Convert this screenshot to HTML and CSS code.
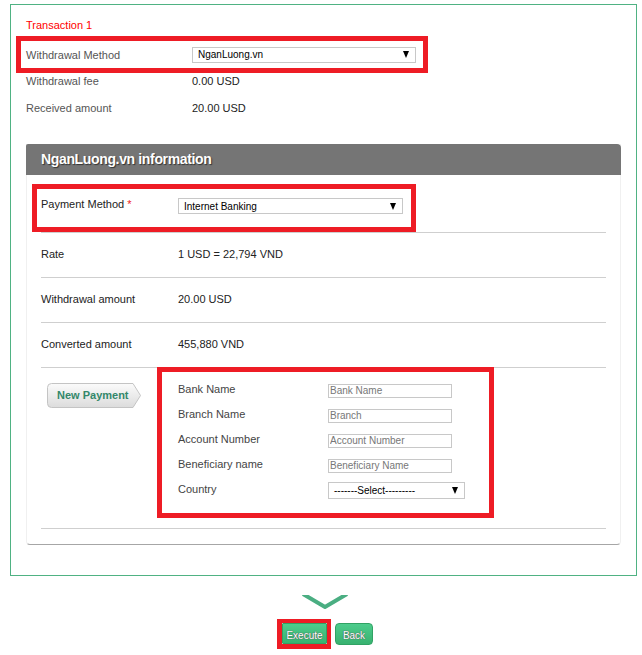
FILE: index.html
```html
<!DOCTYPE html>
<html>
<head>
<meta charset="utf-8">
<link rel="stylesheet" href="styles.css">
</head>
<body>
<div class="outer">
  <div class="txn-title">Transaction 1</div>
  <div class="txn">
    <div class="trow hl hl1">
      <span class="tlabel">Withdrawal Method</span>
      <div class="sel sel1"><span>NganLuong.vn</span><i class="tri"></i></div>
    </div>
    <div class="trow">
      <span class="tlabel">Withdrawal fee</span>
      <span class="tval">0.00 USD</span>
    </div>
    <div class="trow">
      <span class="tlabel">Received amount</span>
      <span class="tval">20.00 USD</span>
    </div>
  </div>

  <div class="panel">
    <div class="panel-head">NganLuong.vn information</div>
    <div class="pm hl">
      <span class="plabel">Payment Method <em>*</em></span>
      <div class="sel sel2"><span>Internet Banking</span><i class="tri"></i></div>
    </div>
    <div class="rows">
      <div class="prow"><span class="plabel">Rate</span><span class="pval">1 USD = 22,794 VND</span></div>
      <div class="prow"><span class="plabel">Withdrawal amount</span><span class="pval">20.00 USD</span></div>
      <div class="prow"><span class="plabel">Converted amount</span><span class="pval">455,880 VND</span></div>
      <div class="newpay">
        <div class="tagcol">
          <svg class="tag" width="95" height="25" viewBox="0 0 95 25">
            <defs>
              <linearGradient id="tg" x1="0" y1="0" x2="0" y2="1">
                <stop offset="0" stop-color="#fbfbfb"/>
                <stop offset="1" stop-color="#dcdcdc"/>
              </linearGradient>
            </defs>
            <path d="M4.5 0.5 H86 L93.5 12.5 L86 24.5 H4.5 Q0.5 24.5 0.5 20.5 V4.5 Q0.5 0.5 4.5 0.5 Z" fill="url(#tg)" stroke="#c4c4c4"/>
            <text x="10" y="16" class="tagtext">New Payment</text>
          </svg>
        </div>
        <div class="bank hl">
          <div class="brow"><span class="blabel">Bank Name</span><input class="inp" placeholder="Bank Name"></div>
          <div class="brow"><span class="blabel">Branch Name</span><input class="inp" placeholder="Branch"></div>
          <div class="brow"><span class="blabel">Account Number</span><input class="inp" placeholder="Account Number"></div>
          <div class="brow"><span class="blabel">Beneficiary name</span><input class="inp" placeholder="Beneficiary Name"></div>
          <div class="brow"><span class="blabel">Country</span><div class="sel sel3"><span>-------Select---------</span><i class="tri"></i></div></div>
        </div>
      </div>
      <div class="endline"></div>
    </div>
  </div>
</div>

<div class="footer">
  <svg class="chev" width="46" height="14" viewBox="0 0 46 14">
    <polyline points="1,-1 23,12 45,-1" fill="none" stroke="#4aae82" stroke-width="4"/>
  </svg>
  <div class="btns">
    <div class="exbox"><div class="btn btn-ex">Execute</div></div>
    <div class="btn btn-back">Back</div>
  </div>
</div>
</body>
</html>
```
FILE: styles.css
```css
* { box-sizing: border-box; }
body {
  margin: 0;
  font-family: "Liberation Sans", Arial, sans-serif;
  font-size: 11px;
  color: #555;
  background: #fff;
}
.outer {
  margin: 4px 0 0 10px;
  width: 627px;
  height: 572px;
  border: 1px solid #4fb283;
  padding-top: 13px;
}
.txn-title {
  margin-left: 15px;
  line-height: 14px;
  font-size: 11px;
  color: #f00;
}
.txn {
  margin: 9px 0 0 10px;
}
.trow {
  display: flex;
  align-items: center;
  height: 27px;
  padding-left: 5px;
  padding-bottom: 2px;
  line-height: 14px;
}
.tlabel { width: 166px; color: #555; }
.tval { color: #222; }
.hl { border: 5px solid #ee1c25; }
.hl1 {
  margin: -5px 0 -5px -5px;
  width: 412px;
  height: 37px;
  padding-left: 5px;
  padding-bottom: 0;
}
.sel {
  display: flex;
  align-items: center;
  justify-content: space-between;
  border: 1px solid #c8c8c8;
  background: #fff;
  color: #000;
  font-size: 10px;
  padding: 0 6px 0 5px;
}
.sel1 { width: 224px; height: 16px; }
.sel2 { width: 225px; height: 16px; }
.sel3 { width: 137px; height: 17px; padding-left: 5px; padding-right: 6px; }
.tri {
  width: 0; height: 0;
  border-left: 3.5px solid transparent;
  border-right: 3.5px solid transparent;
  border-top: 7px solid #000;
}
.panel {
  margin: 22px 0 0 15px;
  width: 595px;
  border: 1px solid #f0f0f0;
  border-top: none;
  border-bottom: 1px solid #a6a6a6;
  border-radius: 0 0 4px 4px;
}
.panel-head {
  margin: 0 -1px;
  height: 31px;
  background: #757575;
  border-radius: 2px 4px 0 0;
  color: #fff;
  font-weight: bold;
  font-size: 14px;
  letter-spacing: -0.35px;
  line-height: 31px;
  padding-left: 15px;
  text-shadow: 1px 1px 1px #333;
}
.pm {
  margin: 9px 0 0 5px;
  width: 384px;
  height: 48px;
  display: flex;
  align-items: flex-start;
  padding: 9px 0 0 4px;
}
.plabel { width: 137px; color: #222; line-height: 12px; }
.plabel em { font-style: normal; color: #e22; }
.pval { color: #222; }
.rows { margin: 0 14px; }
.prow {
  display: flex;
  align-items: center;
  height: 45px;
  padding-bottom: 2px;
  border-top: 1px solid #cfcfcf;
  line-height: 14px;
}
.newpay {
  display: flex;
  border-top: 1px solid #cfcfcf;
}
.tagcol { width: 116px; padding: 15px 0 0 6px; }
.tag { display: block; }
.tagtext {
  font-family: "Liberation Sans", Arial, sans-serif;
  font-weight: bold;
  font-size: 11px;
  fill: #33876a;
}
.bank {
  margin-top: -1px;
  width: 337px;
  height: 151px;
  padding: 6px 0 0 16px;
}
.brow {
  display: flex;
  align-items: center;
  height: 25px;
}
.blabel { width: 150px; color: #444; padding-bottom: 3px; }
.inp {
  width: 124px;
  height: 14px;
  border: 1px solid #c8c8c8;
  padding: 0 1px;
  margin: 0;
  font-family: "Liberation Sans", Arial, sans-serif;
  font-size: 10px;
  outline: none;
}
.inp::placeholder { color: #777; }
.endline {
  margin-top: 10px;
  border-top: 1px solid #cfcfcf;
  height: 16px;
}
.footer {
  width: 642px;
  padding-left: 8px;
  display: flex;
  flex-direction: column;
  align-items: center;
}
.chev { display: block; margin-top: 19px; }
.btns {
  display: flex;
  align-items: flex-start;
  margin-top: 10px;
}
.exbox {
  border-style: solid;
  border-color: #ee1c25;
  border-width: 4px 4px 5px 5px;
}
.btn {
  display: flex;
  align-items: center;
  justify-content: center;
  padding-top: 3px;
  background: linear-gradient(#4dcc8c, #38b270);
  border: 1px solid #31a264;
  border-radius: 3px;
  color: #fff;
  font-size: 10px;
  text-shadow: 0 0 1px #555, 0 0 1px #555;
}
.btn-ex { width: 45px; height: 21px; border-radius: 1px; }
.btn-back { width: 38px; height: 22px; margin: 4px 0 0 4px; border-radius: 4px; }
```
